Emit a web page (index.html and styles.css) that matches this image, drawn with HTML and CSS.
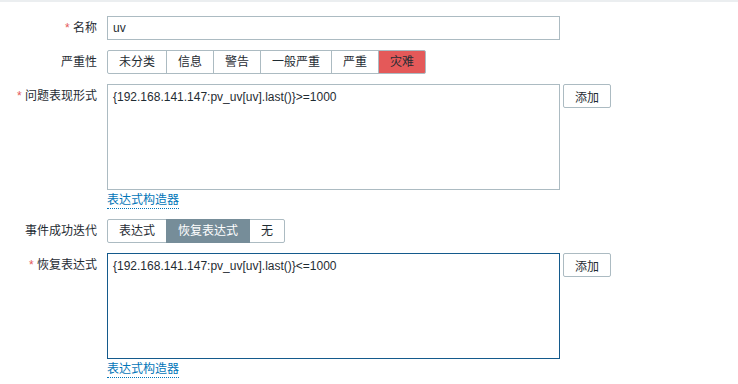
FILE: index.html
```html
<!DOCTYPE html>
<html lang="zh-CN">
<head>
    <meta charset="UTF-8">
    <meta name="viewport" content="width=device-width, initial-scale=1.0">
    <title>触发器</title>
    <link rel="stylesheet" href="styles.css">
</head>
<body>
    <div class="page">
        <ul class="form-list">
            <li class="form-row">
                <div class="form-label"><span class="req">*</span> 名称</div>
                <div class="form-field">
                    <input class="text-input" type="text" value="uv">
                </div>
            </li>
            <li class="form-row">
                <div class="form-label">严重性</div>
                <div class="form-field">
                    <ul class="segmented">
                        <li>未分类</li>
                        <li>信息</li>
                        <li>警告</li>
                        <li>一般严重</li>
                        <li>严重</li>
                        <li class="selected-disaster">灾难</li>
                    </ul>
                </div>
            </li>
            <li class="form-row">
                <div class="form-label"><span class="req">*</span> 问题表现形式</div>
                <div class="form-field expr-field">
                    <div class="expr-col">
                        <textarea class="expr-box">{192.168.141.147:pv_uv[uv].last()}>=1000</textarea>
                        <a class="link-action" href="#">表达式构造器</a>
                    </div>
                    <button class="btn-alt" type="button">添加</button>
                </div>
            </li>
            <li class="form-row">
                <div class="form-label">事件成功迭代</div>
                <div class="form-field">
                    <ul class="segmented">
                        <li>表达式</li>
                        <li class="selected">恢复表达式</li>
                        <li>无</li>
                    </ul>
                </div>
            </li>
            <li class="form-row">
                <div class="form-label"><span class="req">*</span> 恢复表达式</div>
                <div class="form-field expr-field">
                    <div class="expr-col">
                        <textarea class="expr-box focused">{192.168.141.147:pv_uv[uv].last()}<=1000</textarea>
                        <a class="link-action" href="#">表达式构造器</a>
                    </div>
                    <button class="btn-alt" type="button">添加</button>
                </div>
            </li>
        </ul>
    </div>
</body>
</html>
```

FILE: styles.css
```css
/* General Body Styles */
body {
    font-family: 'Liberation Sans', Arial, 'Noto Sans CJK SC', sans-serif;
    font-size: 12px;
    color: #1f2c33;
    background-color: #ffffff;
    margin: 0;
    border-top: 2px solid #ebeef0;
}

.page {
    padding-top: 14px;
}

/* Form List */
.form-list {
    list-style: none;
    margin: 0;
    padding: 0;
    display: flex;
    flex-direction: column;
    gap: 10px;
}

.form-row {
    display: grid;
    grid-template-columns: 97px 1fr;
    column-gap: 10px;
}

.form-label {
    text-align: right;
    line-height: 24px;
    white-space: nowrap;
}

.req {
    color: #e45959;
}

/* Inputs */
.text-input {
    box-sizing: border-box;
    width: 453px;
    height: 24px;
    margin: 0;
    padding: 0 5px;
    border: 1px solid #acbbc2;
    font-family: inherit;
    font-size: 12px;
    color: #1f2c33;
    outline: none;
}

/* Segmented Radio Buttons */
.segmented {
    list-style: none;
    margin: 0;
    padding: 0;
    display: flex;
}

.segmented li {
    box-sizing: border-box;
    height: 24px;
    line-height: 22px;
    padding: 0 11px;
    border: 1px solid #acbbc2;
    margin-left: -1px;
    background: #ffffff;
    white-space: nowrap;
}

.segmented li:first-child {
    margin-left: 0;
    border-radius: 2px 0 0 2px;
}

.segmented li:last-child {
    border-radius: 0 2px 2px 0;
}

.segmented li.selected {
    background-color: #768d99;
    border-color: #768d99;
    color: #ffffff;
    position: relative;
}

.segmented li.selected-disaster {
    background-color: #e45959;
    border-color: #acbbc2;
}

/* Expression Fields */
.expr-field {
    display: flex;
    align-items: flex-start;
    gap: 3px;
}

.expr-col {
    display: flex;
    flex-direction: column;
    align-items: flex-start;
}

.expr-box {
    box-sizing: border-box;
    width: 453px;
    height: 106px;
    margin: 0;
    padding: 5px 5px;
    border: 1px solid #acbbc2;
    font-family: inherit;
    font-size: 12px;
    line-height: 14px;
    color: #1f2c33;
    resize: none;
    outline: none;
    display: block;
}

.expr-box.focused {
    border-color: #145a8c;
}

.link-action {
    margin-top: 2px;
    line-height: 16px;
    color: #0275b8;
    text-decoration: none;
    border-bottom: 1px dotted #0275b8;
}

/* Button Styling */
.btn-alt {
    box-sizing: border-box;
    height: 24px;
    margin: 0;
    padding: 0 11px;
    background-color: #ffffff;
    border: 1px solid #acbbc2;
    border-radius: 2px;
    font-family: inherit;
    font-size: 12px;
    color: #1f2c33;
    cursor: pointer;
}
```
